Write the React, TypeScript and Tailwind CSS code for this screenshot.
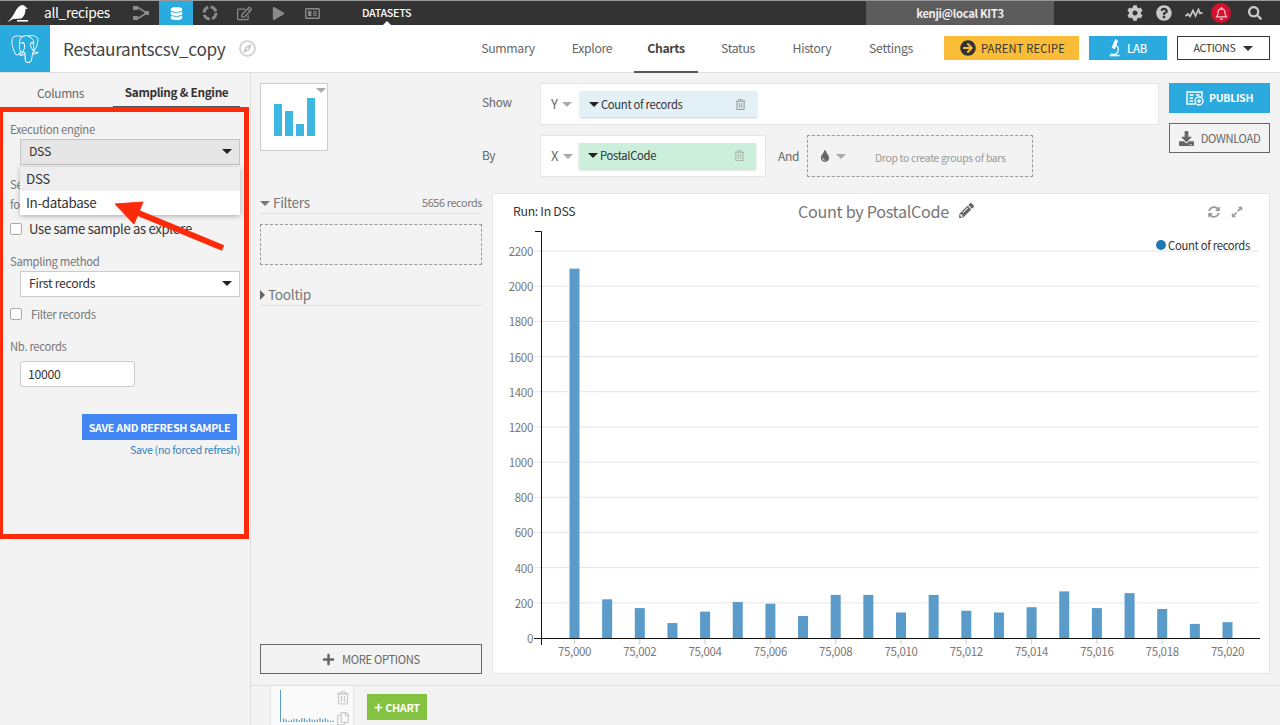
import {
  FaArrowCircleRight,
  FaCog,
  FaDatabase,
  FaDownload,
  FaExpandAlt,
  FaPencilAlt,
  FaPlay,
  FaPlus,
  FaQuestionCircle,
  FaRegBell,
  FaRegCompass,
  FaRegCopy,
  FaRegEdit,
  FaRegTrashAlt,
  FaSearch,
  FaSyncAlt,
  FaTint,
} from "react-icons/fa";
import { SiPostgresql } from "react-icons/si";

const navItems = ["Summary", "Explore", "Charts", "Status", "History", "Settings"];
const navWidths = ["w-[84px]", "w-[84px]", "w-[64px]", "w-[80px]", "w-[68px]", "w-[90px]"];

const barValues = [
  2100, 220, 170, 85, 150, 205, 195, 125, 245, 245, 145, 245, 155, 145, 175, 265, 170, 255, 165, 80, 90,
];
const yTicks = [0, 200, 400, 600, 800, 1000, 1200, 1400, 1600, 1800, 2000, 2200];

const Caret = ({ className }: { className: string }) => (
  <span className={`inline-block h-0 w-0 border-x-[5px] border-t-[5px] border-x-transparent ${className}`} />
);

const BirdLogo = () => (
  <svg width="24" height="20" viewBox="0 0 24 20" fill="white">
    <path d="M2 19.5 C5 16.5 8 13 10 9 C11.5 5.5 14 2.5 17.5 2 C19 2 20 3 20.5 4 L23 5.5 L20.5 6 C20.5 10 19.5 13 16.5 15.5 L8 16 Z" />
    <rect x="12" y="17" width="11" height="1.6" />
  </svg>
);

const FlowIcon = () => (
  <svg width="16" height="14" viewBox="0 0 16 14" fill="#8a8a8a">
    <rect x="0" y="0" width="5" height="4" />
    <rect x="0" y="10" width="5" height="4" />
    <rect x="11" y="5" width="5" height="4" />
    <path d="M5 1.5 L12 6 M5 12.5 L12 8" stroke="#8a8a8a" strokeWidth="1.6" />
  </svg>
);

const RingIcon = () => (
  <svg width="16" height="16" viewBox="0 0 16 16" fill="none" stroke="#8a8a8a" strokeWidth="3">
    <circle cx="8" cy="8" r="6" strokeDasharray="7 2.4" />
  </svg>
);

const PanelIcon = () => (
  <svg width="15" height="11" viewBox="0 0 15 11" fill="none" stroke="#8a8a8a" strokeWidth="1.4">
    <rect x="0.7" y="0.7" width="13.6" height="9.6" rx="1" />
    <rect x="3" y="3" width="3.4" height="5" fill="#8a8a8a" stroke="none" />
    <path d="M8 3.7 H12 M8 5.5 H12 M8 7.3 H12" strokeWidth="1" />
  </svg>
);

const WaveIcon = () => (
  <svg width="18" height="11" viewBox="0 0 18 11" fill="none" stroke="#c8c8c8" strokeWidth="1.7">
    <path d="M0.5 8 L3 6 L5 8.5 L8 2.5 L10.5 8 L13.5 1.5 L15 5.5 L17.5 4.5" />
  </svg>
);

const PublishIcon = () => (
  <svg width="18" height="15" viewBox="0 0 18 15" fill="none" stroke="white" strokeWidth="1.4">
    <path d="M9 13 H1 V1 H16 V6" />
    <path d="M3.5 4 H7.5 M3.5 7 H7 M3.5 10 H7 M10 4 H13.5" />
    <circle cx="13" cy="10" r="4" fill="#2aaadf" />
    <path d="M13 8 V12 M11 10 H15" />
  </svg>
);

const LabIcon = () => (
  <svg width="11" height="18" viewBox="0 0 11 18" fill="none" stroke="white" strokeWidth="1.3">
    <path d="M6.5 1 L3.5 8.5 L5.5 9.3 L8.3 2 Z" fill="white" />
    <path d="M7.5 6.5 C10 8.5 10 12.5 7.5 14.5 C6 15.8 3.5 15.5 2 14.5" />
    <path d="M0.5 16.5 H10.5" strokeWidth="1.6" />
  </svg>
);

const TopBar = () => (
  <div className="flex h-[25px] items-center border-t border-[#9a9a9a] bg-[#333333] text-white">
    <div className="flex w-[44px] justify-center pr-[10px]">
      <BirdLogo />
    </div>
    <span className="w-[80px] text-[13.75px] leading-none">all_recipes</span>
    <div className="flex h-full w-[34px] items-center justify-center">
      <FlowIcon />
    </div>
    <div className="ml-[1px] flex h-full w-[34px] items-center justify-center bg-[#29abe0]">
      <FaDatabase className="text-[13px] text-white" />
    </div>
    <div className="flex h-full w-[34px] items-center justify-center">
      <RingIcon />
    </div>
    <div className="flex h-full w-[34px] items-center justify-center">
      <FaRegEdit className="text-[15px] text-[#8a8a8a]" />
    </div>
    <div className="flex h-full w-[34px] items-center justify-center">
      <FaPlay className="text-[13px] text-[#8a8a8a]" />
    </div>
    <div className="flex h-full w-[34px] items-center justify-center">
      <PanelIcon />
    </div>
    <div className="relative ml-[33px] flex h-full w-[49px] items-center text-[10.75px] font-medium">
      DATASETS
      <span className="absolute bottom-0 left-[21px] h-0 w-0 border-x-[4px] border-b-[4px] border-x-transparent border-b-white" />
    </div>
    <div className="ml-[455px] flex h-full w-[188px] items-center justify-center bg-[#5c5c5c] text-[11.25px] font-bold text-[#eeeeee]">
      kenji@local KIT3
    </div>
    <div className="flex h-full flex-1 items-center text-[#c8c8c8]">
      <FaCog className="ml-[73px] text-[16px]" />
      <FaQuestionCircle className="ml-[13px] text-[16px]" />
      <span className="ml-[13px]">
        <WaveIcon />
      </span>
      <span className="ml-[8px] flex h-[20px] w-[20px] items-center justify-center rounded-full bg-[#d5112e]">
        <FaRegBell className="text-[13px] text-[#f4c9cf]" />
      </span>
      <FaSearch className="ml-[17px] text-[14px]" />
    </div>
  </div>
);

const Header = () => (
  <div className="flex h-[48px] items-stretch border-b border-[#dedede] bg-white">
    <div className="flex w-[50px] items-center justify-center bg-[#29abe0]">
      <SiPostgresql className="text-[28px] text-white" />
    </div>
    <div className="ml-[13px] flex w-[176px] items-center text-[17.2px] leading-none text-[#444444]">
      Restaurantscsv_copy
    </div>
    <div className="flex w-[19px] items-center">
      <FaRegCompass className="text-[17px] text-[#cccccc]" />
    </div>
    <div className="ml-[208px] flex items-stretch text-[12.25px]">
      {navItems.map((item, i) => (
        <div
          key={item}
          className={`flex items-center justify-center ${navWidths[i]} ${
            item === "Charts"
              ? "-mb-[1px] border-b-2 border-[#555555] font-bold text-[#444444]"
              : "text-[#666666]"
          }`}
        >
          {item}
        </div>
      ))}
    </div>
    <div className="ml-[8px] flex items-center gap-[10px] pb-[1px]">
      <button className="flex h-[24px] w-[135px] items-center justify-center gap-[5px] bg-[#fbbd38] pl-[2px] text-[11.1px] tracking-[0.2px] text-[#333333]">
        <FaArrowCircleRight className="text-[16px]" />
        PARENT RECIPE
      </button>
      <button className="flex h-[24px] w-[78px] items-center justify-center gap-[7px] bg-[#2aaadf] text-[11.25px] font-medium text-white">
        <LabIcon />
        LAB
      </button>
      <button className="flex h-[24px] w-[93px] items-center justify-center gap-[8px] border border-[#333333] bg-white text-[10.6px] text-[#333333]">
        ACTIONS
        <Caret className="border-t-[#333333]" />
      </button>
    </div>
  </div>
);

const Checkbox = () => (
  <span className="h-[12px] w-[12px] shrink-0 rounded-[2px] border border-[#a9a9a9] bg-white" />
);

const Sidebar = () => (
  <div className="relative flex w-[251px] shrink-0 flex-col border-r border-[#dedede] pl-[10px] pr-[10px] text-[12.25px] text-[#333333]">
    <div className="-ml-[10px] flex h-[34px] items-stretch">
      <div className="flex w-[114px] items-center justify-center pl-[8px] pt-[6px] text-[11.9px] text-[#666666]">
        Columns
      </div>
      <div className="flex w-[128px] items-center justify-center border-b border-[#555555] pt-[4px] text-[11.8px] font-bold text-[#333333]">
        Sampling &amp; Engine
      </div>
    </div>
    <div className="mt-[14px] text-[11.3px] leading-[16px] text-[#777777]">Execution engine</div>
    <div className="relative ml-[10px] mt-[2px]">
      <div className="flex h-[26px] items-center justify-between border border-[#c4c4c4] bg-[#e6e6e6] pb-[1px] pl-[8px] pr-[7px]">
        DSS
        <Caret className="border-t-[#222222]" />
      </div>
      <div className="absolute left-0 top-[28px] w-[220px] bg-white text-[13.4px] shadow-[0_1px_5px_rgba(0,0,0,0.3)]">
        <div className="flex h-[24px] items-center bg-[#eeeeee] pb-[1px] pl-[6px]">DSS</div>
        <div className="flex h-[24px] items-center pb-[1px] pl-[6px]">In-database</div>
      </div>
    </div>
    <div className="mt-[9px] text-[11.3px] leading-[20px] text-[#777777]">Se</div>
    <div className="text-[11.3px] leading-[20px] text-[#777777]">fo</div>
    <div className="mt-[7px] flex h-[16px] items-center gap-[7px] text-[13.1px]">
      <Checkbox />
      Use same sample as explore
    </div>
    <div className="mt-[16px] text-[11.3px] leading-[16px] text-[#777777]">Sampling method</div>
    <div className="ml-[10px] mt-[2px] flex h-[26px] items-center justify-between border border-[#cccccc] bg-white pb-[1px] pl-[8px] pr-[7px]">
      First records
      <Caret className="border-t-[#222222]" />
    </div>
    <div className="mt-[10px] flex h-[14px] items-center gap-[9px] text-[11.3px] text-[#777777]">
      <Checkbox />
      Filter records
    </div>
    <div className="mt-[17px] text-[11.3px] leading-[16px] text-[#777777]">Nb. records</div>
    <div className="ml-[10px] mt-[7px] flex h-[26px] w-[115px] items-center rounded-[3px] border border-[#cccccc] bg-white pl-[7px]">
      10000
    </div>
    <button className="ml-[72px] mt-[27px] flex h-[26px] w-[155px] items-center justify-center whitespace-nowrap bg-[#4285f4] text-[10.8px] font-bold text-white">
      SAVE AND REFRESH SAMPLE
    </button>
    <div className="mt-[2px] text-right text-[10.7px] leading-[16px] text-[#2f7fc1]">Save (no forced refresh)</div>
  </div>
);

const ChartControls = () => (
  <div className="flex h-[120px] pl-[9px] pr-[10px] pt-[10px]">
    <div className="relative flex h-[68px] w-[68px] items-end justify-center gap-[3px] border border-[#cccccc] bg-white pb-[14px]">
      <span className="h-[32px] w-[8px] bg-[#3db6e2]" />
      <span className="h-[25px] w-[8px] bg-[#3db6e2]" />
      <span className="h-[12px] w-[8px] bg-[#3db6e2]" />
      <span className="h-[38px] w-[8px] bg-[#3db6e2]" />
      <span className="absolute right-[1px] top-[4px] h-0 w-0 border-x-[5px] border-t-[5px] border-x-transparent border-t-[#aaaaaa]" />
    </div>
    <div className="ml-[154px] flex w-[58px] flex-col text-[11.9px] text-[#666666]">
      <div className="flex h-[37px] items-center">Show</div>
      <div className="mt-[14px] flex h-[42px] items-center">By</div>
    </div>
    <div className="flex flex-1 flex-col gap-[10px]">
      <div className="flex h-[42px] items-center border border-[#e5e5e5] bg-white pl-[10px]">
        <span className="w-[29px] text-[13px] text-[#666666]">
          Y <Caret className="mb-[2px] ml-[2px] border-t-[#aaaaaa]" />
        </span>
        <div className="flex h-[26px] w-[177px] items-center justify-between bg-[#e3f1f7] pl-[9px] pr-[11px] text-[11.25px] text-[#333333] shadow-[0_1px_2px_rgba(0,0,0,0.2)]">
          <span className="flex items-center gap-[2px]">
            <Caret className="border-t-[#222222]" />
            Count of records
          </span>
          <FaRegTrashAlt className="text-[11px] text-[#999999]" />
        </div>
      </div>
      <div className="flex h-[42px] items-center">
        <div className="flex h-[42px] w-[226px] items-center border border-[#e5e5e5] bg-white pb-[1px] pl-[10px]">
          <span className="w-[28px] text-[13px] text-[#666666]">
            X <Caret className="mb-[2px] ml-[2px] border-t-[#aaaaaa]" />
          </span>
          <div className="flex h-[26px] w-[177px] items-center justify-between bg-[#ccefdc] pl-[9px] pr-[11px] text-[11.25px] text-[#333333] shadow-[0_1px_2px_rgba(0,0,0,0.2)]">
            <span className="flex items-center gap-[2px]">
              <Caret className="border-t-[#222222]" />
              PostalCode
            </span>
            <FaRegTrashAlt className="text-[11px] text-[#a5b5ac]" />
          </div>
        </div>
        <span className="ml-[12px] w-[29px] text-[12px] text-[#666666]">And</span>
        <div className="flex h-[42px] w-[226px] items-center border border-dashed border-[#999999] pl-[11px]">
          <FaTint className="text-[12px] text-[#666666]" />
          <span className="ml-[5px] flex">
            <Caret className="border-t-[#aaaaaa]" />
          </span>
          <span className="ml-[29px] mt-[3px] text-[10.4px] text-[#999999]">Drop to create groups of bars</span>
        </div>
      </div>
    </div>
    <div className="ml-[10px] flex w-[101px] flex-col gap-[10px]">
      <button className="flex h-[30px] items-center justify-center gap-[5px] bg-[#2aaadf] text-[10.6px] font-bold text-white">
        <PublishIcon />
        PUBLISH
      </button>
      <button className="flex h-[30px] items-center justify-center gap-[7px] border border-[#666666] text-[11.2px] text-[#666666]">
        <FaDownload className="text-[15px]" />
        DOWNLOAD
      </button>
    </div>
  </div>
);

const FilterColumn = () => (
  <div className="flex w-[222px] shrink-0 flex-col">
    <div className="flex h-[21px] items-center justify-between border-b border-[#dedede] text-[10.75px] text-[#777777]">
      <span className="flex items-center gap-[3px] text-[13.5px] leading-none">
        <Caret className="border-t-[#777777]" />
        Filters
      </span>
      5656 records
    </div>
    <div className="mt-[10px] h-[41px] border border-dashed border-[#999999]" />
    <div className="mt-[19px] flex h-[22px] items-center gap-[3px] border-b border-[#dedede] text-[13.7px] leading-none text-[#777777]">
      <span className="h-0 w-0 border-y-[5px] border-l-[5px] border-y-transparent border-l-[#666666]" />
      Tooltip
    </div>
    <button className="mt-auto flex h-[30px] items-center justify-center gap-[7px] border border-[#666666] text-[11.2px] text-[#666666]">
      <FaPlus className="text-[13px]" />
      MORE OPTIONS
    </button>
  </div>
);

const BarChart = () => (
  <svg width="776" height="456" className="block">
    <g transform="translate(-493,-224)" fontFamily="'Noto Sans CJK SC', sans-serif">
      {yTicks.map((t) => {
        const y = 638 - (t / 200) * 35.18;
        return (
          <g key={t}>
            {t > 0 && <line x1="534" x2="1259" y1={y} y2={y} stroke="#e4e4e4" />}
            <text x="533" y={y + 5} textAnchor="end" fontSize="11.5" fill="#777777">
              {t}
            </text>
          </g>
        );
      })}
      {barValues.map((v, i) => {
        const h = (v / 200) * 35.18;
        const x = 569.5 + i * 32.65;
        return (
          <g key={i}>
            <rect x={x} y={638 - h} width="10" height={h} fill="#5a9bca" />
            {i % 2 === 0 && (
              <>
                <line x1={x + 5} x2={x + 5} y1="638" y2="644" stroke="#cccccc" />
                <text x={x + 5} y="656" textAnchor="middle" fontSize="11.5" fill="#777777">
                  {`75,${String(i).padStart(3, "0")}`}
                </text>
              </>
            )}
          </g>
        );
      })}
      <path d="M535 231.5 H541.5 V645" fill="none" stroke="#111111" />
      <line x1="534" x2="1260" y1="638.5" y2="638.5" stroke="#111111" />
      <circle cx="1161" cy="245" r="5" fill="#1f77b4" />
      <text x="1168" y="250" fontSize="11.3" fill="#333333">
        Count of records
      </text>
    </g>
  </svg>
);

const ChartPanel = () => (
  <div className="flex-1 border border-[#e5e5e5] bg-white">
    <div className="flex h-[30px] items-center">
      <span className="ml-[20px] mt-[5px] w-[210px] text-[12.3px] text-[#333333]">Run: In DSS</span>
      <span className="ml-[75px] mt-[5px] text-[16.2px] leading-none text-[#777777]">Count by PostalCode</span>
      <FaPencilAlt className="ml-[10px] mt-[3px] text-[15px] text-[#666666]" />
      <FaSyncAlt className="ml-[234px] mt-[5px] text-[12px] text-[#999999]" />
      <FaExpandAlt className="ml-[11px] mt-[5px] text-[12px] text-[#999999]" />
    </div>
    <BarChart />
  </div>
);

const BottomBar = () => (
  <div className="flex h-[40px] items-stretch border-t border-[#dedede] pl-[19px]">
    <div className="flex w-[84px] border-x border-[#e5e5e5] bg-[#fafafa] pl-[9px] pt-[4px]">
      <svg width="57" height="36">
        <rect x="0" y="0" width="1" height="32" fill="#5a9bca" />
        {barValues.slice(1).map((v, i) => (
          <rect key={i} x={3 + i * 2.6} y={32 - v / 65} width="1.2" height={v / 65} fill="#5a9bca" />
        ))}
      </svg>
      <div className="-ml-[1px] flex flex-col gap-[7px] pt-[1px] text-[14px] text-[#cccccc]">
        <FaRegTrashAlt />
        <FaRegCopy />
      </div>
    </div>
    <button className="ml-[13px] mt-[8px] flex h-[26px] w-[60px] items-center justify-center gap-[2px] bg-[#83c341] text-[10.8px] font-bold text-white">
      <FaPlus className="text-[9px]" />
      CHART
    </button>
  </div>
);

const Annotations = () => (
  <>
    <div className="pointer-events-none absolute left-0 top-[107px] h-[432px] w-[249px] border-y-[5px] border-l-[3px] border-r-[5px] border-[#ff2a0a]" />
    <svg width="120" height="70" className="pointer-events-none absolute left-[112px] top-[196px]">
      <path d="M111 52 L24 16" stroke="#ff2a0a" strokeWidth="6" />
      <path d="M3 8 L31 6 L22 28 Z" fill="#ff2a0a" stroke="#ff2a0a" strokeWidth="1" />
    </svg>
  </>
);

export default function App() {
  return (
    <div className="relative flex h-[725px] w-[1280px] flex-col overflow-hidden bg-[#f3f3f3] font-['Noto_Sans_CJK_SC','Source_Sans_Pro',sans-serif] tracking-[-0.02em]">
      <TopBar />
      <Header />
      <div className="flex min-h-0 flex-1">
        <Sidebar />
        <div className="flex min-w-0 flex-1 flex-col">
          <ChartControls />
          <div className="flex h-[481px] gap-[10px] pl-[9px] pr-[10px]">
            <FilterColumn />
            <ChartPanel />
          </div>
          <div className="mt-[11px] flex-1">
            <BottomBar />
          </div>
        </div>
      </div>
      <Annotations />
    </div>
  );
}
